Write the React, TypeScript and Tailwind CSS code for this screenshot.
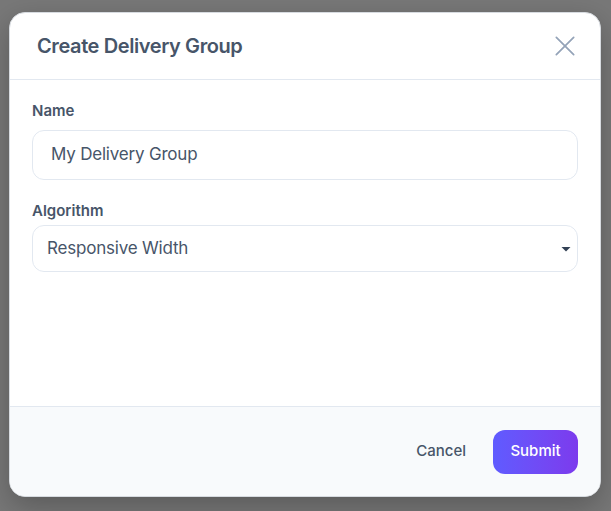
import React from "react";

export default function App() {
  return (
    <div
      className="w-full h-[511px] bg-[#787878] pt-[12px] pl-[9px] pr-[10px] overflow-hidden"
      style={{ fontFamily: "Inter, 'Noto Sans', sans-serif" }}
    >
      <div className="w-[592px] h-[485px] bg-white rounded-[16px] shadow-[0_10px_30px_rgba(0,0,0,0.25)] flex flex-col overflow-hidden border border-[#d7dbe0]">
        <div className="h-[67px] flex items-center justify-between pl-[27px] pr-[22px] border-b border-[#e2e8f0] shrink-0">
          <h2 className="text-[20px] font-semibold text-[#475569] tracking-[-0.4px]">Create Delivery Group</h2>
          <button className="text-[#94a3b8]">
            <svg width="26" height="26" viewBox="0 0 24 24" fill="none" stroke="currentColor" strokeWidth="1.6" strokeLinecap="round">
              <path d="M4 4L20 20M20 4L4 20" />
            </svg>
          </button>
        </div>
        <div className="flex-1 px-[22px] pt-[21px] flex flex-col">
          <label className="text-[15px] font-semibold text-[#475569] leading-[20px]">Name</label>
          <div className="mt-[9px] h-[50px] rounded-[12px] border border-[#e2e8f0] flex items-center pl-[18px] text-[17px] text-[#475569] tracking-[-0.2px]">
            My Delivery Group
          </div>
          <label className="mt-[21px] text-[15px] font-semibold text-[#475569] leading-[20px]">Algorithm</label>
          <div className="mt-[4px] h-[47px] rounded-[12px] border border-[#e2e8f0] flex items-center justify-between pl-[14px] pr-[5px] text-[17px] text-[#475569] tracking-[-0.2px]">
            <span>Responsive Width</span>
            <svg width="12" height="8" viewBox="0 0 12 8">
              <path d="M1.5 2h9L6 6.5z" fill="#334155" />
            </svg>
          </div>
        </div>
        <div className="h-[90px] bg-[#f8fafc] border-t border-[#e2e8f0] flex items-center justify-end pr-[22px] shrink-0">
          <button className="text-[15px] font-medium text-[#475569] px-[10px] py-[8px] mr-[17px]">Cancel</button>
          <button className="h-[44px] w-[85px] rounded-[12px] bg-gradient-to-r from-[#5f5bff] to-[#7c3aed] text-white text-[15px] font-medium">
            Submit
          </button>
        </div>
      </div>
    </div>
  );
}
